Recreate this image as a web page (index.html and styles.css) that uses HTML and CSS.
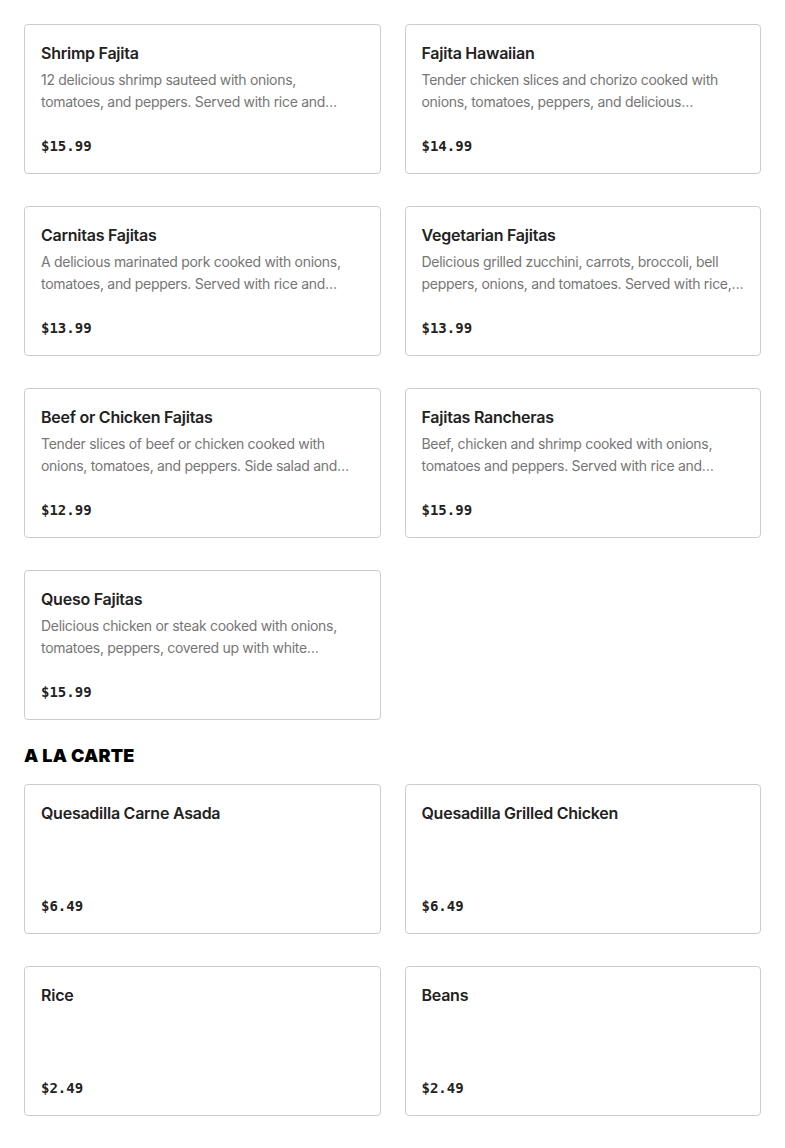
FILE: index.html
```html
<!DOCTYPE html>
<html>
<head>
<meta charset="utf-8">
<link rel="stylesheet" href="styles.css">
</head>
<body>
<main class="menu">
  <section class="grid">
    <div class="card">
      <h3 class="title">Shrimp Fajita</h3>
      <p class="desc">12 delicious shrimp sauteed with onions, tomatoes,&nbsp;and peppers. Served with rice and…</p>
      <div class="price">$15.99</div>
    </div>
    <div class="card">
      <h3 class="title">Fajita Hawaiian</h3>
      <p class="desc">Tender chicken slices and chorizo cooked with onions, tomatoes, peppers, and delicious…</p>
      <div class="price">$14.99</div>
    </div>
    <div class="card">
      <h3 class="title">Carnitas Fajitas</h3>
      <p class="desc">A delicious marinated pork cooked with onions, tomatoes, and peppers. Served with rice and…</p>
      <div class="price">$13.99</div>
    </div>
    <div class="card">
      <h3 class="title">Vegetarian Fajitas</h3>
      <p class="desc">Delicious grilled zucchini, carrots, broccoli, bell peppers, onions, and tomatoes. Served with rice,…</p>
      <div class="price">$13.99</div>
    </div>
    <div class="card">
      <h3 class="title">Beef or Chicken Fajitas</h3>
      <p class="desc">Tender slices of beef or chicken cooked with onions, tomatoes, and peppers. Side salad and…</p>
      <div class="price">$12.99</div>
    </div>
    <div class="card">
      <h3 class="title">Fajitas Rancheras</h3>
      <p class="desc">Beef, chicken and shrimp cooked with onions, tomatoes and peppers. Served with rice and…</p>
      <div class="price">$15.99</div>
    </div>
    <div class="card">
      <h3 class="title">Queso Fajitas</h3>
      <p class="desc">Delicious chicken or steak cooked with onions, tomatoes, peppers, covered up with white…</p>
      <div class="price">$15.99</div>
    </div>
  </section>
  <h2 class="section-title">A LA CARTE</h2>
  <section class="grid">
    <div class="card">
      <h3 class="title">Quesadilla Carne Asada</h3>
      <div class="price">$6.49</div>
    </div>
    <div class="card">
      <h3 class="title">Quesadilla Grilled Chicken</h3>
      <div class="price">$6.49</div>
    </div>
    <div class="card">
      <h3 class="title">Rice</h3>
      <div class="price">$2.49</div>
    </div>
    <div class="card">
      <h3 class="title">Beans</h3>
      <div class="price">$2.49</div>
    </div>
  </section>
</main>
</body>
</html>
```

FILE: styles.css
```css
html, body {
  margin: 0;
  padding: 0;
  background: #ffffff;
}
body {
  font-family: Inter, "Liberation Sans", sans-serif;
  color: #222222;
}
.menu {
  padding: 24px 24px 32px;
}
.grid {
  display: grid;
  grid-template-columns: 1fr 1fr;
  column-gap: 24px;
  row-gap: 32px;
}
.card {
  box-sizing: border-box;
  height: 150px;
  border: 1px solid #cccccc;
  border-radius: 4px;
  padding: 16px;
  display: flex;
  flex-direction: column;
}
.title {
  margin: 0;
  font-size: 16px;
  line-height: 24px;
  font-weight: 600;
  letter-spacing: -0.25px;
  color: #222222;
}
.desc {
  margin: 4px 0 0;
  font-size: 14px;
  line-height: 22px;
  letter-spacing: -0.3px;
  color: #767676;
}
.price {
  margin-top: auto;
  font-family: "DejaVu Sans Mono", "Liberation Mono", monospace;
  font-weight: 700;
  font-size: 14px;
  line-height: 22px;
  color: #222222;
}
.section-title {
  margin: 24px 0 16px;
  font-size: 18px;
  line-height: 24px;
  font-weight: 900;
  color: #000000;
  letter-spacing: 0.2px;
}
```
